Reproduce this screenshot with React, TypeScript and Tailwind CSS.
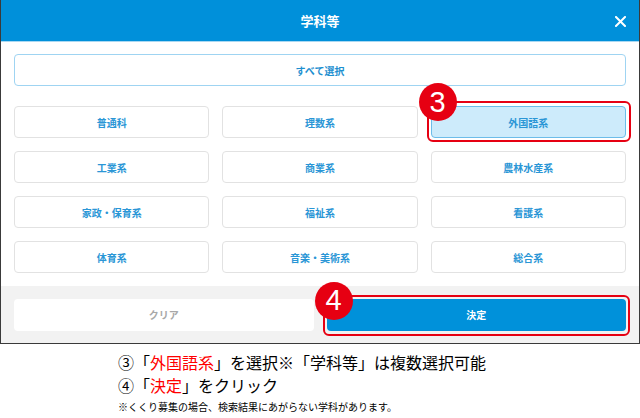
const subjects = [
  "普通科",
  "理数系",
  "外国語系",
  "工業系",
  "商業系",
  "農林水産系",
  "家政・保育系",
  "福祉系",
  "看護系",
  "体育系",
  "音楽・美術系",
  "総合系",
];

const font = { fontFamily: '"Noto Sans CJK JP", "Noto Sans", sans-serif' };

function Badge({ n, className }: { n: string; className: string }) {
  return (
    <span
      className={`absolute z-10 flex h-[38px] w-[38px] items-center justify-center rounded-full bg-[#e60012] text-[29px] leading-none text-white ${className}`}
      style={{ fontFamily: '"Liberation Sans", Arial, sans-serif' }}
    >
      {n}
    </span>
  );
}

export default function App() {
  return (
    <div className="h-[418px] w-[640px] overflow-hidden bg-white" style={font}>
      <div className="flex h-[344px] flex-col border-x border-b border-[#3a3a3a]">
        <header className="relative flex h-[42px] shrink-0 items-center justify-center border-b border-[#a9d8f2] bg-[#0090da]">
          <h1 className="text-[13px] font-bold text-white">学科等</h1>
          <svg
            className="absolute right-[13px] top-[16px]"
            width="11"
            height="11"
            viewBox="0 0 11 11"
          >
            <path d="M1 1L10 10M10 1L1 10" stroke="white" strokeWidth="2" strokeLinecap="square" />
          </svg>
        </header>

        <div className="px-[13px] pb-[13px] pt-[12px]">
          <button className="flex h-[32px] w-full items-center justify-center rounded-[4px] border border-[#9fd4f2] bg-white text-[10px] font-bold text-[#1e8fd0]">
            すべて選択
          </button>

          <div className="mt-[20px] grid grid-cols-3 gap-[13px]">
            {subjects.map((s) => {
              const selected = s === "外国語系";
              return (
                <div key={s} className="relative">
                  <button
                    className={`flex h-[32px] w-full items-center justify-center rounded-[4px] border text-[10px] font-bold ${
                      selected
                        ? "border-[#6cbce9] bg-[#cdebfb] text-[#2a96d6]"
                        : "border-[#e2e2e2] bg-white text-[#2a96d6]"
                    }`}
                  >
                    {s}
                  </button>
                  {selected ? (
                    <>
                      <span className="pointer-events-none absolute -bottom-[4px] -left-[4px] -right-[5px] -top-[5px] rounded-[6px] border-2 border-[#e60012]" />
                      <Badge n="3" className="-left-[12px] -top-[23px]" />
                    </>
                  ) : null}
                </div>
              );
            })}
          </div>
        </div>

        <footer className="flex flex-1 items-center gap-[13px] bg-[#f2f2f2] px-[13px]">
          <button className="h-[32px] flex-1 rounded-[4px] bg-white text-[10px] font-bold text-[#a8a8a8]">
            クリア
          </button>
          <div className="relative flex-1">
            <button className="h-[32px] w-full rounded-[4px] bg-[#0091da] text-[10px] font-bold text-white">
              決定
            </button>
            <span className="pointer-events-none absolute -bottom-[5px] -left-[4px] -right-[4px] -top-[4px] rounded-[6px] border-2 border-[#e60012]" />
            <Badge n="4" className="-left-[12px] -top-[17px]" />
          </div>
        </footer>
      </div>

      <div className="pl-[118px] pt-[7px] text-black">
        <p className="text-[16px] leading-[22px]">
          ③「<span className="text-[#ff0000]">外国語系</span>」を選択※「学科等」は複数選択可能
        </p>
        <p className="text-[16px] leading-[25px]">
          ④「<span className="text-[#ff0000]">決定</span>」をクリック
        </p>
        <p className="text-[10px] leading-[18px]">
          ※くくり募集の場合、検索結果にあがらない学科があります。
        </p>
      </div>
    </div>
  );
}
